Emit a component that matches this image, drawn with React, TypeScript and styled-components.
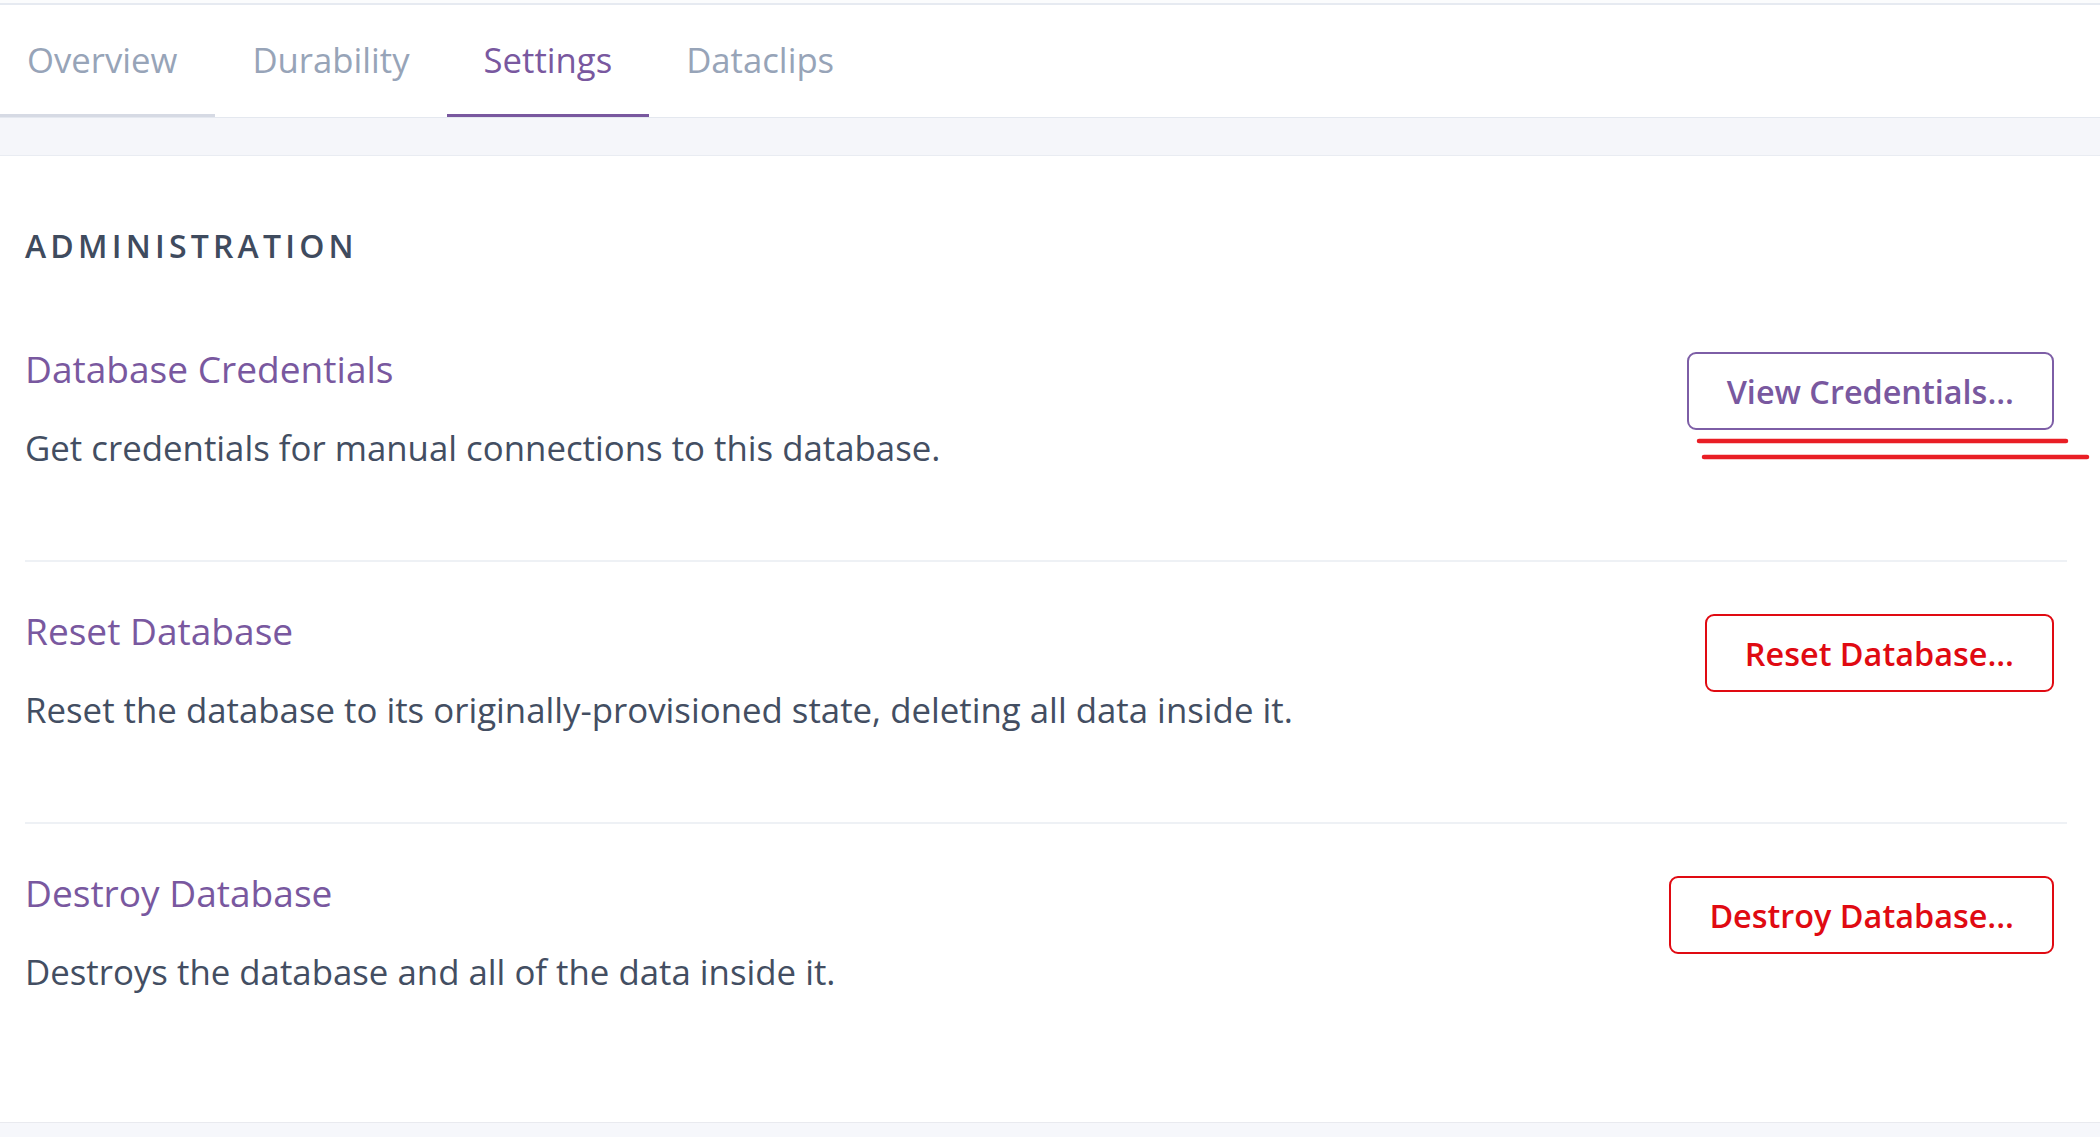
import React from "react";
import styled, { createGlobalStyle } from "styled-components";

const GlobalStyle = createGlobalStyle`
  html, body { margin: 0; padding: 0; background: #f6f7fb; }
  body { font-family: "Open Sans", "Noto Sans", sans-serif; -webkit-font-smoothing: antialiased; }
  * { box-sizing: border-box; }
`;

const Page = styled.div`
  min-height: 1137px;
  background: #f6f7fb;
  display: flex;
  flex-direction: column;
`;

const TopStrip = styled.div`
  height: 3px;
  background: #fbfcfd;
`;

const TabBar = styled.nav`
  display: flex;
  background: #ffffff;
  border-top: 2px solid #e6eaf1;
  border-bottom: 1px solid #e4e8ef;
`;

const Tab = styled.a<{ $active?: boolean; $hover?: boolean }>`
  display: block;
  padding: 35px 37px 34px;
  font-size: 34.7px;
  line-height: 40px;
  color: ${(p) => (p.$active ? "#79589f" : "#97a4b8")};
  border-bottom: 3px solid
    ${(p) => (p.$active ? "#79589f" : p.$hover ? "#d6dae4" : "transparent")};
  text-decoration: none;
  cursor: pointer;
  &:first-child {
    padding-left: 27px;
    padding-right: 38px;
  }
`;

const Band = styled.div`
  height: 38px;
  background: #f5f6fa;
  border-bottom: 1px solid #e9ecf2;
`;

const Card = styled.main`
  background: #ffffff;
  padding: 70px 33px 38px 25px;
  border-bottom: 1px solid #e9eaef;
`;

const SectionHeader = styled.h2`
  margin: 0 0 34px;
  font-size: 32px;
  line-height: 40px;
  font-weight: 600;
  letter-spacing: 4.2px;
  color: #3f4b5e;
  text-transform: uppercase;
`;

const Setting = styled.section<{ $last?: boolean }>`
  position: relative;
  display: flex;
  justify-content: space-between;
  align-items: flex-start;
  padding: 47px 0 90px;
  border-bottom: ${(p) => (p.$last ? "none" : "2px solid #eef1f5")};
`;

const Info = styled.div`
  display: flex;
  flex-direction: column;
  gap: 35px;
`;

const Title = styled.h3`
  margin: 0;
  font-size: 37.1px;
  line-height: 44px;
  font-weight: 400;
  color: #79589f;
`;

const Description = styled.p`
  margin: 0;
  font-size: 34.8px;
  line-height: 44px;
  color: #434e62;
`;

const ActionButton = styled.button<{ $danger?: boolean }>`
  margin: 5px 13px 0 0;
  height: 78px;
  padding: 0 38px;
  display: inline-flex;
  align-items: center;
  justify-content: center;
  background: #ffffff;
  border: 2px solid ${(p) => (p.$danger ? "#e00a12" : "#7d5ea6")};
  border-radius: 9px;
  color: ${(p) => (p.$danger ? "#e00a12" : "#79589f")};
  font-family: "Open Sans", "Noto Sans", sans-serif;
  font-size: 32.4px;
  font-weight: 600;
  line-height: 40px;
  white-space: nowrap;
  cursor: pointer;
`;

const Annotation = styled.svg`
  position: absolute;
  left: 1643px;
  top: 136px;
  width: 400px;
  height: 28px;
  overflow: visible;
  pointer-events: none;
`;

type Item = {
  title: string;
  description: string;
  action: string;
  danger?: boolean;
  annotated?: boolean;
};

const items: Item[] = [
  {
    title: "Database Credentials",
    description: "Get credentials for manual connections to this database.",
    action: "View Credentials...",
    annotated: true,
  },
  {
    title: "Reset Database",
    description:
      "Reset the database to its originally-provisioned state, deleting all data inside it.",
    action: "Reset Database...",
    danger: true,
  },
  {
    title: "Destroy Database",
    description: "Destroys the database and all of the data inside it.",
    action: "Destroy Database...",
    danger: true,
  },
];

const tabs = ["Overview", "Durability", "Settings", "Dataclips"];

export default function App() {
  return (
    <>
      <GlobalStyle />
      <Page>
        <TopStrip />
        <TabBar>
          {tabs.map((t) => (
            <Tab key={t} $active={t === "Settings"} $hover={t === "Overview"}>
              {t}
            </Tab>
          ))}
        </TabBar>
        <Band />
        <Card>
          <SectionHeader>Administration</SectionHeader>
          {items.map((it, i) => (
            <Setting key={it.title} $last={i === items.length - 1}>
              <Info>
                <Title>{it.title}</Title>
                <Description>{it.description}</Description>
              </Info>
              <ActionButton $danger={it.danger}>{it.action}</ActionButton>
              {it.annotated && (
                <Annotation viewBox="0 0 400 28">
                  <line x1="31" y1="5" x2="398" y2="5" stroke="#e91e25" strokeWidth="4.5" strokeLinecap="round" />
                  <line x1="36" y1="21" x2="419" y2="21" stroke="#e91e25" strokeWidth="4.5" strokeLinecap="round" />
                </Annotation>
              )}
            </Setting>
          ))}
        </Card>
      </Page>
    </>
  );
}
